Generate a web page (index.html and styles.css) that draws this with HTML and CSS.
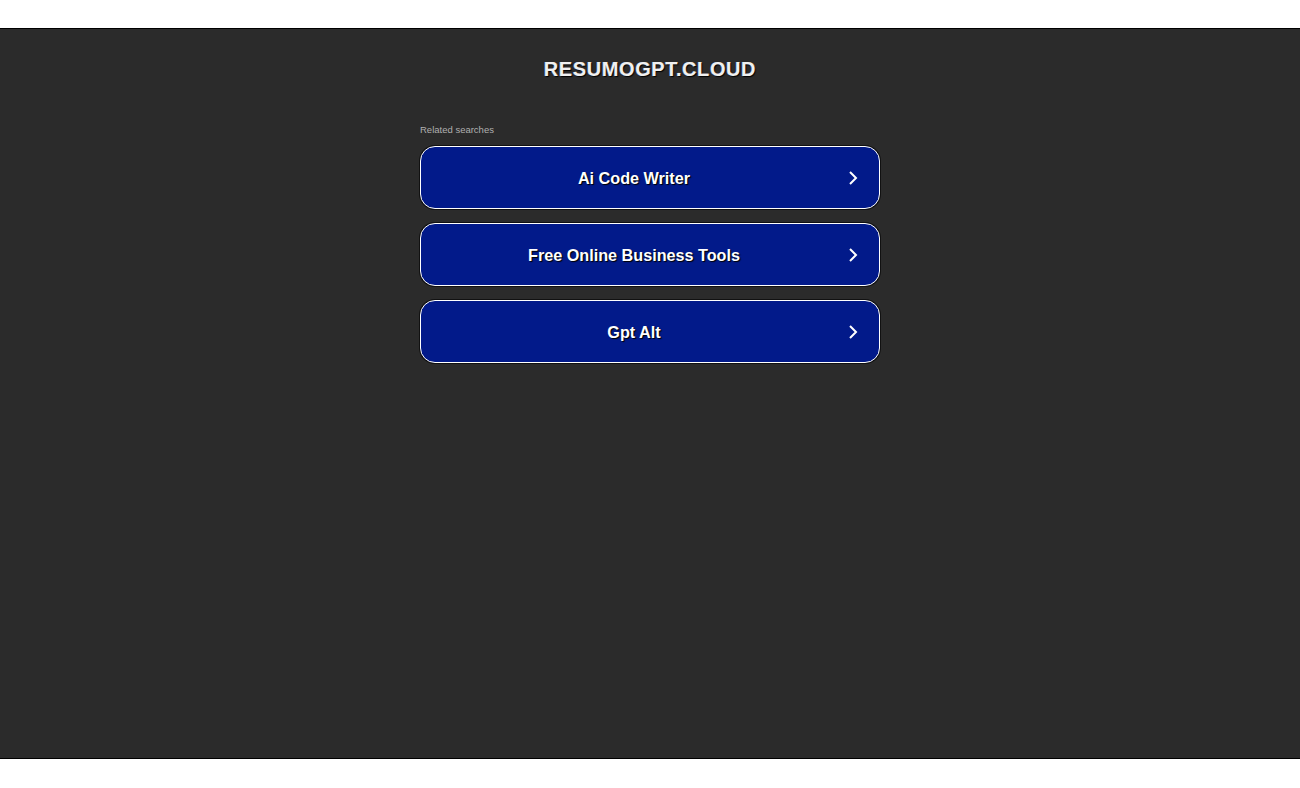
FILE: index.html
```html
<!DOCTYPE html>
<html>
<head>
<meta charset="utf-8">
<link rel="stylesheet" href="styles.css">
</head>
<body>
<div class="top"></div>
<div class="main">
  <h1 class="title">RESUMOGPT.CLOUD</h1>
  <div class="related">
    <div class="label">Related searches</div>
    <a class="btn" href="#"><span>Ai Code Writer</span><svg class="chev" width="10" height="16" viewBox="0 0 10 16"><path d="M2 2 L8 8 L2 14" fill="none" stroke="#fff" stroke-width="2"/></svg></a>
    <a class="btn" href="#"><span>Free Online Business Tools</span><svg class="chev" width="10" height="16" viewBox="0 0 10 16"><path d="M2 2 L8 8 L2 14" fill="none" stroke="#fff" stroke-width="2"/></svg></a>
    <a class="btn" href="#"><span>Gpt Alt</span><svg class="chev" width="10" height="16" viewBox="0 0 10 16"><path d="M2 2 L8 8 L2 14" fill="none" stroke="#fff" stroke-width="2"/></svg></a>
  </div>
</div>
</body>
</html>
```
FILE: styles.css
```css
html, body { margin: 0; padding: 0; background: #fff; font-family: "Liberation Sans", Arial, sans-serif; }
.top { height: 28px; }
.main {
  height: 729px;
  background: #2b2b2b;
  border-top: 1px solid #000;
  border-bottom: 1px solid #000;
  display: flex;
  flex-direction: column;
  align-items: center;
}
.title {
  margin: 30px 0 0;
  font-size: 20px;
  line-height: 20px;
  font-weight: bold;
  color: #f0f0f0;
  letter-spacing: 0.6px;
  text-shadow: 1px 1px 1px #000, -0.5px 0 0 rgba(120,170,255,0.6), 0.5px 0 0 rgba(255,200,120,0.6);
}
.related { width: 460px; margin-top: 46px; display: flex; flex-direction: column; gap: 14px; }
.label { font-size: 9.5px; color: #b0b0b0; line-height: 10px; margin-bottom: -3px; }
.btn {
  height: 61px;
  border: 1px solid #fff;
  border-radius: 15px;
  background: #021a8a;
  box-shadow: 0 0 0 1px #111;
  display: flex;
  align-items: center;
  justify-content: center;
  position: relative;
  text-decoration: none;
  color: #fff;
  font-weight: bold;
  font-size: 16.2px;
  text-shadow: 1px 1px 1px #000;
}
.btn span { margin-left: -32px; padding-top: 2px; }
.chev { position: absolute; right: 21px; top: 23px; }
```
